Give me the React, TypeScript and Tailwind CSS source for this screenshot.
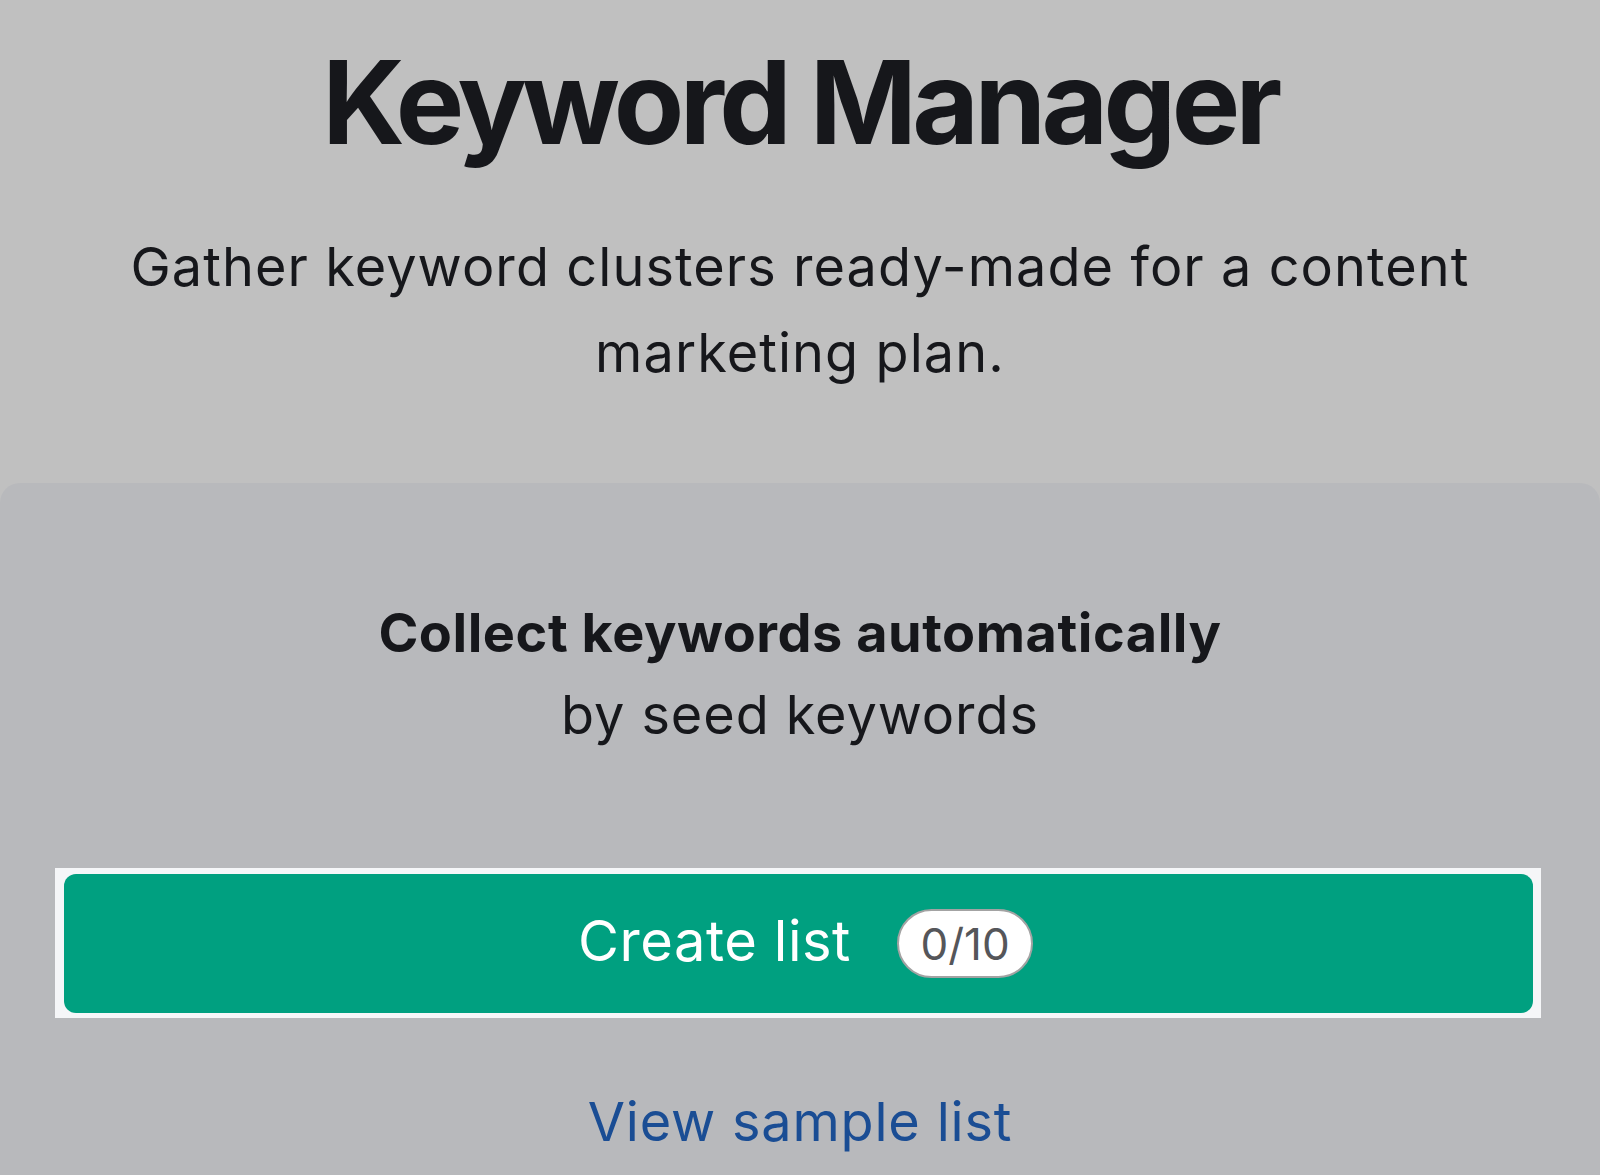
import React from "react";

export default function App() {
  return (
    <div
      className="w-[1600px] h-[1175px] bg-[#c0c0c0] flex flex-col overflow-hidden text-[#16171b]"
      style={{ fontFamily: "Inter, 'Noto Sans', sans-serif" }}
    >
      <header className="h-[483px] shrink-0 flex flex-col items-center pt-[43px]">
        <h1 className="text-[115px] leading-[120px] font-bold tracking-[-0.04em] text-[#16171b]">
          Keyword Manager
        </h1>
        <p className="mt-[61px] text-[54px] leading-[86px] tracking-[0.02em] text-center text-[#16171b]">
          Gather keyword clusters ready-made for a content
          <br />
          marketing plan.
        </p>
      </header>
      <main className="flex-1 bg-[#b8b9bc] rounded-t-[20px] flex flex-col items-center pt-[109px]">
        <div className="text-center text-[54px] leading-[82px]">
          <div className="font-bold tracking-[0.01em]">Collect keywords automatically</div>
          <div className="tracking-[0.017em]">by seed keywords</div>
        </div>
        <div className="self-start ml-[55px] mt-[112px] w-[1486px] h-[150px] bg-[#f5f6f8] pt-[6px] pb-[5px] pl-[9px] pr-[8px]">
          <button className="w-full h-full bg-[#00a080] rounded-[12px] flex items-center justify-center gap-[46px] pl-[14px]">
            <span className="text-white text-[56px] leading-none tracking-[0.01em] -translate-y-[3px]">Create list</span>
            <span className="h-[69px] w-[136px] rounded-full bg-white border-2 border-[#a3a3a3] flex items-center justify-center text-[44px] text-[#55565a] leading-none">
              0/10
            </span>
          </button>
        </div>
        <a className="mt-[71px] text-[54px] leading-[66px] tracking-[0.015em] text-[#1a4d94]">View sample list</a>
      </main>
    </div>
  );
}
